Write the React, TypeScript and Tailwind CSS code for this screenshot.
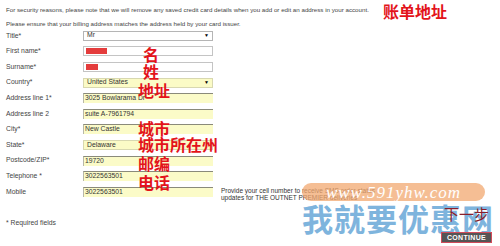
import React from "react";

const cjk = { fontFamily: '"Noto Sans CJK SC", "Noto Sans", sans-serif' };

type Row = { label: string; kind: "select" | "white" | "yellow" | "yselect"; value?: string; redact?: number; note?: boolean };

const rows: Row[] = [
  { label: "Title*", kind: "select", value: "Mr" },
  { label: "First name*", kind: "white", redact: 21 },
  { label: "Surname*", kind: "white", redact: 12 },
  { label: "Country*", kind: "yselect", value: "United States" },
  { label: "Address line 1*", kind: "yellow", value: "3025 Bowlarama Dr" },
  { label: "Address line 2", kind: "yellow", value: "suite A-7961794" },
  { label: "City*", kind: "yellow", value: "New Castle" },
  { label: "State*", kind: "yselect", value: "Delaware" },
  { label: "Postcode/ZIP*", kind: "yellow", value: "19720" },
  { label: "Telephone *", kind: "yellow", value: "3022563501" },
  { label: "Mobile", kind: "yellow", value: "3022563501", note: true },
];

function Field({ r }: { r: Row }) {
  if (r.kind === "select") {
    return (
      <div className="w-[130px] h-[10px] bg-white border border-[#b5b5b5] flex items-center justify-between px-[3px]">
        <span className="text-[6.8px] text-[#333] leading-none">{r.value}</span>
        <span className="text-[5px] text-black leading-none">▼</span>
      </div>
    );
  }
  if (r.kind === "white") {
    return (
      <div className="w-[130px] h-[10px] bg-white border border-[#c4c4c4] flex items-center px-[2px]">
        <div className="h-[6px] bg-[#e43c3c]" style={{ width: r.redact }} />
      </div>
    );
  }
  if (r.kind === "yselect") {
    return (
      <div className="w-[130px] h-[10px] bg-[#fbfbc6] border border-[#d8d8b0] flex items-center justify-between px-[3px]">
        <span className="text-[6.8px] text-[#333] leading-none">{r.value}</span>
        {r.value === "United States" && <span className="text-[5px] text-black leading-none">▼</span>}
      </div>
    );
  }
  return (
    <div className="w-[130px] h-[10px] bg-[#fbfbc8] border-t border-l border-t-[#8a8a7a] border-l-[#b8b8a8] flex items-center px-[1px]">
      <span className="text-[6.8px] text-[#333] leading-none">{r.value}</span>
    </div>
  );
}

export default function App() {
  return (
    <div
      className="relative w-[500px] h-[246px] bg-white overflow-hidden"
      style={{ fontFamily: '"Liberation Sans", Arial, sans-serif' }}
    >
      <div className="flex flex-col px-[6px] pt-[4px] text-[#444]">
        <div className="h-[12px] flex items-center text-[6.2px] whitespace-nowrap">
          For security reasons, please note that we will remove any saved credit card details when you add or edit an address in your account.
        </div>
        <div className="h-[12px] mt-[2px] flex items-center text-[6.2px] whitespace-nowrap">
          Please ensure that your billing address matches the address held by your card issuer.
        </div>
        <div className="flex flex-col mt-[-2px]">
          {rows.map((r) => (
            <div key={r.label} className="h-[15.6px] flex items-center">
              <div className="w-[77px] text-[6.8px] text-[#444]">{r.label}</div>
              <Field r={r} />
              {r.note && (
                <div className="ml-[8px] text-[6.5px] leading-[7.5px] text-[#333] mt-[5px]">
                  Provide your cell number to receive SMS order status
                  <br />
                  updates for THE OUTNET PREMIER deliveries
                </div>
              )}
            </div>
          ))}
        </div>
        <div className="mt-[18px] text-[6.8px] text-[#444]">* Required fields</div>
      </div>

      {/* red annotations */}
      <div className="absolute left-[383px] top-[3px] text-[16px] font-bold text-[#e3141b] leading-none" style={cjk}>账单地址</div>
      <div className="absolute left-[143px] top-[46px] text-[16px] font-bold text-[#e3141b] leading-none" style={cjk}>名</div>
      <div className="absolute left-[143px] top-[63px] text-[16px] font-bold text-[#e3141b] leading-none" style={cjk}>姓</div>
      <div className="absolute left-[138px] top-[82px] text-[16px] font-bold text-[#e3141b] leading-none" style={cjk}>地址</div>
      <div className="absolute left-[138px] top-[120px] text-[16px] font-bold text-[#e3141b] leading-none" style={cjk}>城市</div>
      <div className="absolute left-[138px] top-[136px] text-[16px] font-bold text-[#e3141b] leading-none" style={cjk}>城市所在州</div>
      <div className="absolute left-[138px] top-[155px] text-[16px] font-bold text-[#e3141b] leading-none" style={cjk}>邮编</div>
      <div className="absolute left-[138px] top-[174px] text-[16px] font-bold text-[#e3141b] leading-none" style={cjk}>电话</div>

      {/* watermark */}
      <div className="absolute left-[302px] top-[183px] w-[183px] h-[18px] rounded-[9px] bg-[#f2a870]/75 flex items-center justify-center">
        <span className="text-[17px] italic text-white tracking-[1px] leading-none" style={{ fontFamily: '"Liberation Serif", serif' }}>
          www.591yhw.com
        </span>
      </div>
      <div className="absolute left-[302px] top-[202px] text-[31px] font-bold text-[#7eb4dd] leading-none tracking-[1px]" style={cjk}>
        我就要优惠网
      </div>

      {/* next step */}
      <div className="absolute left-[444px] top-[206px] text-[15px] text-[#8a1e2a] leading-none" style={cjk}>下一步</div>
      <div className="absolute left-[441px] top-[232px] w-[51px] h-[11px] bg-[#555555] border border-[#d24a5a] flex items-center justify-center">
        <span className="text-[7px] font-bold text-white leading-none tracking-[0.3px]">CONTINUE</span>
      </div>
    </div>
  );
}
